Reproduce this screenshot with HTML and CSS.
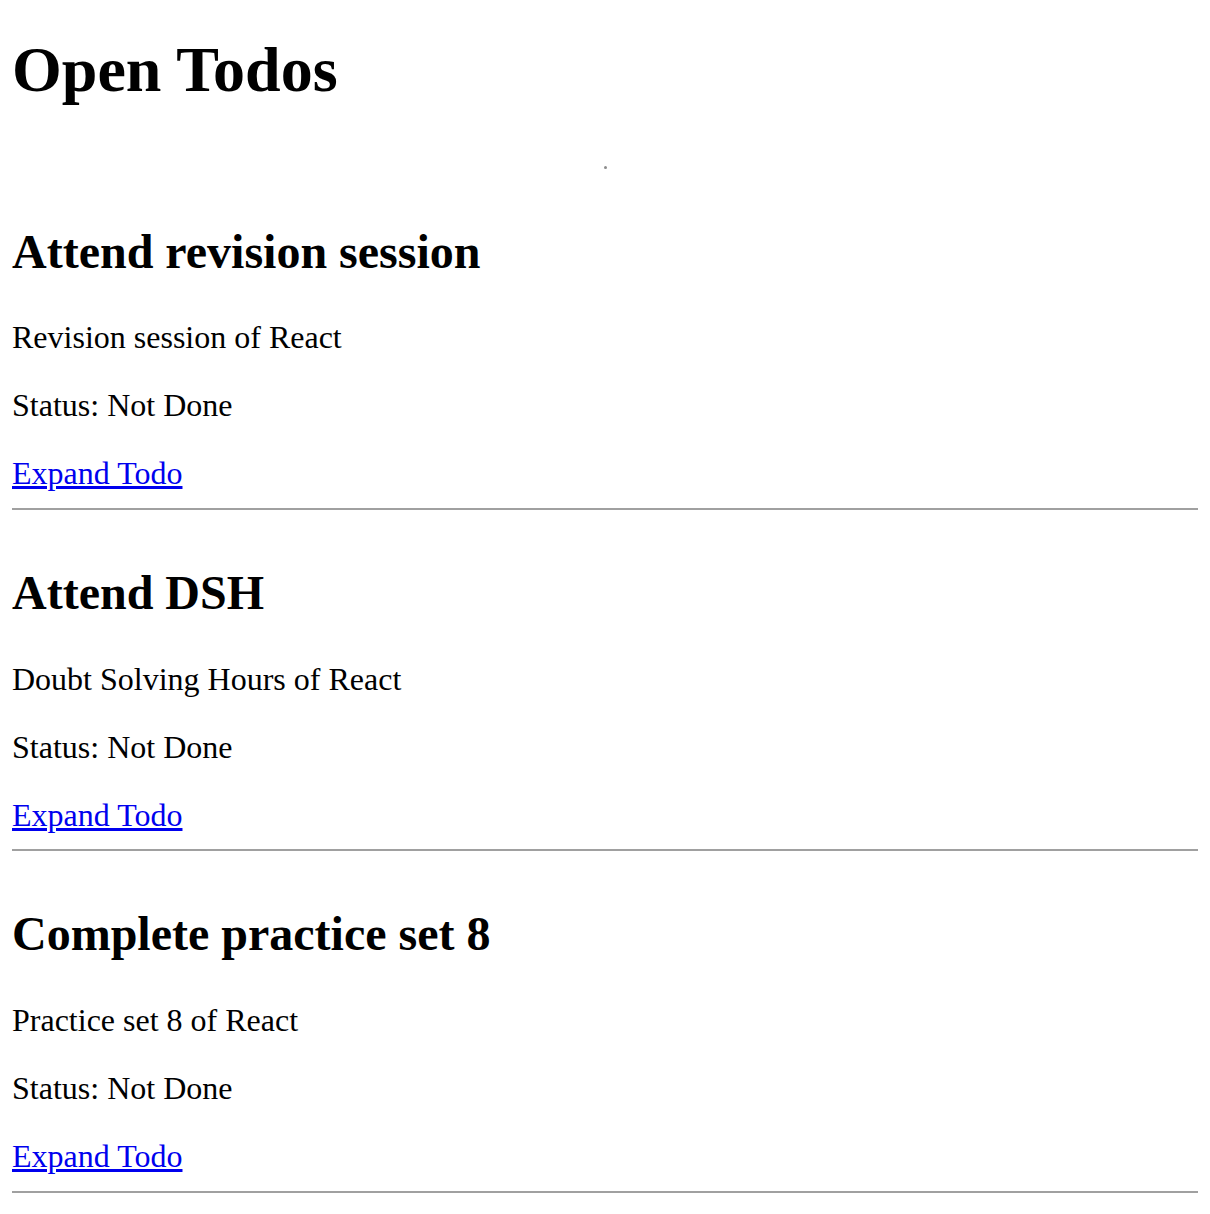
FILE: index.html
```html
<!DOCTYPE html>
<html lang="en">
<head>
<meta charset="utf-8">
<title>Open Todos</title>
<link rel="stylesheet" href="styles.css">
</head>
<body>
<div class="page">
  <h1 class="title">Open Todos</h1>
  <div class="loader"></div>
  <ul class="todos">
    <li class="todo">
      <h2 class="todo-title">Attend revision session</h2>
      <p class="todo-line first">Revision session of React</p>
      <p class="todo-line">Status: Not Done</p>
      <p class="todo-line"><a class="todo-link" href="#">Expand Todo</a></p>
      <hr class="todo-rule">
    </li>
    <li class="todo">
      <h2 class="todo-title">Attend DSH</h2>
      <p class="todo-line first">Doubt Solving Hours of React</p>
      <p class="todo-line">Status: Not Done</p>
      <p class="todo-line"><a class="todo-link" href="#">Expand Todo</a></p>
      <hr class="todo-rule">
    </li>
    <li class="todo">
      <h2 class="todo-title">Complete practice set 8</h2>
      <p class="todo-line first">Practice set 8 of React</p>
      <p class="todo-line">Status: Not Done</p>
      <p class="todo-line"><a class="todo-link" href="#">Expand Todo</a></p>
      <hr class="todo-rule">
    </li>
  </ul>
</div>
</body>
</html>
```
FILE: styles.css
```css
html, body {
  margin: 0;
  padding: 0;
  background: #ffffff;
}

body {
  font-family: "Liberation Serif", "Times New Roman", serif;
  color: #000000;
}

.page {
  display: flex;
  flex-direction: column;
  padding: 0 12px;
}

.title {
  margin: 33px 0 0;
  font-size: 64px;
  font-weight: bold;
  line-height: 73.6px;
}

.loader {
  align-self: center;
  width: 3px;
  height: 3px;
  margin-top: 59px;
  background: #8c8c8c;
  border-radius: 50%;
}

.todos {
  list-style: none;
  margin: 0;
  padding: 0;
  display: flex;
  flex-direction: column;
}

.todo {
  display: flex;
  flex-direction: column;
  padding-top: 55px;
}

.todo-title {
  margin: 0;
  font-size: 48px;
  font-weight: bold;
  line-height: 55.2px;
}

.todo-line {
  margin: 31.2px 0 0;
  font-size: 32px;
  line-height: 36.8px;
}

.todo-line.first {
  margin-top: 40.4px;
}

.todo-link {
  color: #0000ee;
  text-decoration: underline;
}

.todo-rule {
  margin: 16px 0 0;
  height: 0;
  border: 0;
  border-top: 2px solid #a0a0a0;
}
```
